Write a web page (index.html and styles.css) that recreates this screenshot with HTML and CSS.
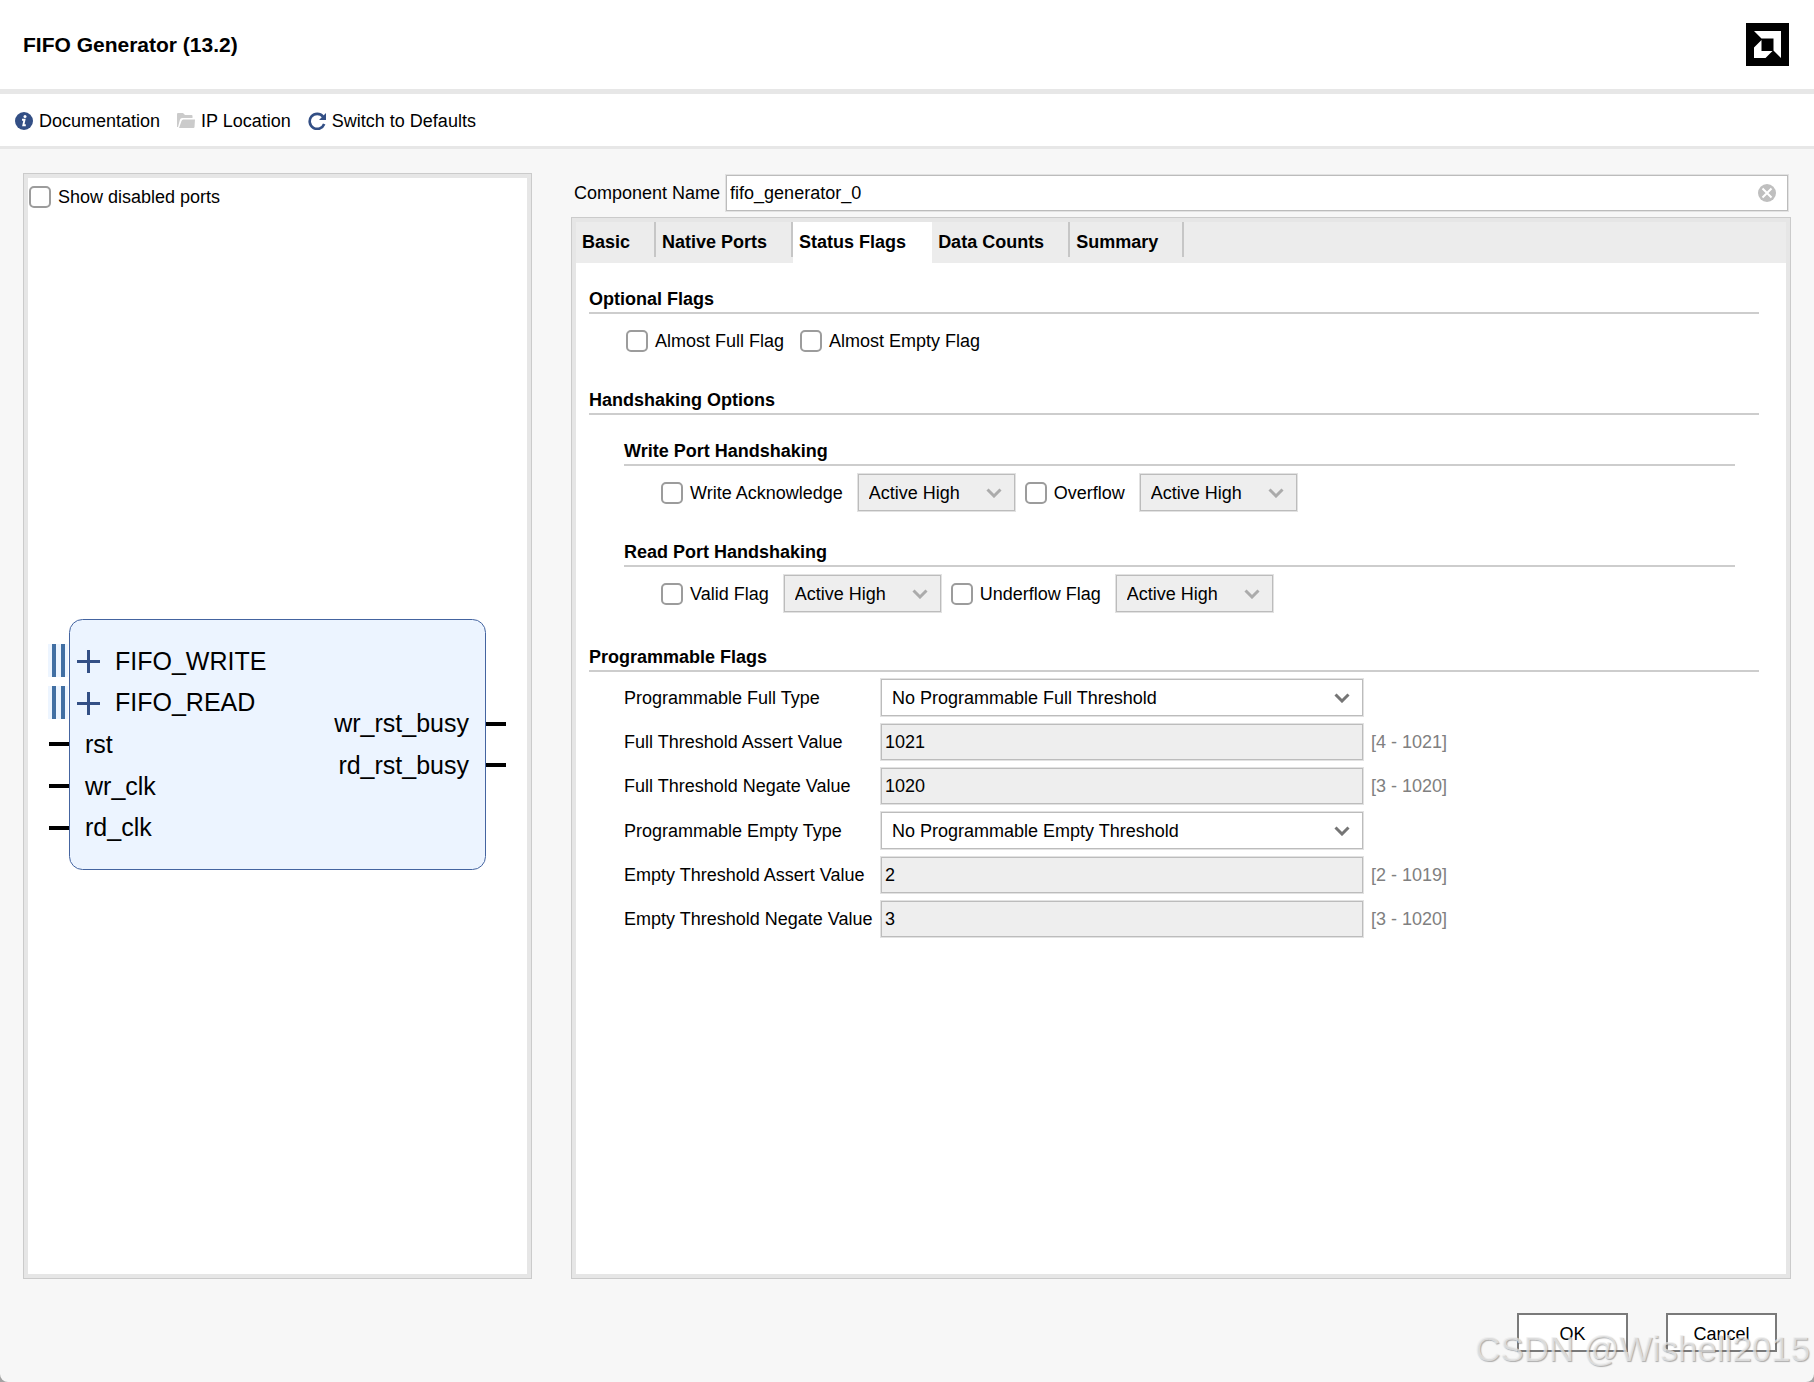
FILE: index.html
```html
<!DOCTYPE html>
<html lang="en">
<head>
    <meta charset="UTF-8">
    <meta name="viewport" content="width=device-width, initial-scale=1.0">
    <title>FIFO Generator (13.2)</title>
    <link rel="stylesheet" href="styles.css">
</head>
<body>
    <div class="window">
        <header class="header">
            <h1>FIFO Generator (13.2)</h1>
            <svg class="logo" viewBox="0 0 43 43" aria-hidden="true">
                <rect width="43" height="43" fill="#000"/>
                <path d="M8 8H35V35L27.5 27.5V15.5H15.5Z" fill="#fff"/>
                <path d="M15.5 17V28H26.5L19.5 35H8V24.500Z" fill="#fff"/>
            </svg>
        </header>

        <!-- Toolbar -->
        <nav class="toolbar">
            <a href="#documentation">
                <svg viewBox="0 0 18 18" aria-hidden="true">
                    <circle cx="9" cy="9" r="9" fill="#334f85"/>
                    <circle cx="10" cy="4.600" r="1.500" fill="#fff"/>
                    <path d="M7 7.800H9.500L8.300 13.200H10.800" fill="none" stroke="#fff" stroke-width="1.900"/>
                </svg>
                Documentation
            </a>
            <a href="#location">
                <svg viewBox="0 0 18 18" aria-hidden="true">
                    <path d="M0 15V2Q0 1 1 1H6L8 3H14.500Q15.500 3 15.500 4V6H5Q3.500 6 3 7.500L1 15Z" fill="#cbcbcb"/>
                    <path d="M2 16L4.500 9Q5 7.500 6.300 7.500H18L17.500 15Q17.400 16 16.500 16Z" fill="#cbcbcb"/>
                </svg>
                IP Location
            </a>
            <a href="#defaults">
                <svg viewBox="0 0 18 18" aria-hidden="true">
                    <path d="M15 4.600A7.500 7.500 0 1 0 16.200 12" fill="none" stroke="#334f85" stroke-width="2.600"/>
                    <path d="M18 1V8H11Z" fill="#334f85"/>
                </svg>
                Switch to Defaults
            </a>
        </nav>

        <main class="main">
            <!-- Block symbol -->
            <section class="panel">
                <div class="panel-inner preview">
                    <label class="check preview-option"><input type="checkbox"> Show disabled ports</label>
                    <div class="preview-canvas">
                        <svg class="diagram" width="459" height="252" viewBox="0 0 459 252" role="img" aria-label="FIFO ports">
                            <rect x="21.500" y="0.500" width="416" height="250" rx="13" fill="#ecf4ff" stroke="#4464a0"/>
                            <g fill="#edf5ff">
                                <rect x="0" y="25" width="20" height="33"/>
                                <rect x="0" y="67" width="20" height="33"/>
                            </g>
                            <g fill="#416fa3">
                                <rect x="4" y="25" width="4" height="33"/>
                                <rect x="13" y="25" width="4" height="33"/>
                                <rect x="4" y="67" width="4" height="33"/>
                                <rect x="13" y="67" width="4" height="33"/>
                            </g>
                            <path d="M29 42.500H52M40.500 31V54M29 84.500H52M40.500 73V96" stroke="#334f85" stroke-width="3"/>
                            <path d="M1 125H21M1 167H21M1 209H21M438 105H458M438 146H458" stroke="#000" stroke-width="4"/>
                            <text x="67" y="51">FIFO_WRITE</text>
                            <text x="67" y="92">FIFO_READ</text>
                            <text x="37" y="134">rst</text>
                            <text x="37" y="176">wr_clk</text>
                            <text x="37" y="217">rd_clk</text>
                            <text x="421" y="113" text-anchor="end">wr_rst_busy</text>
                            <text x="421" y="155" text-anchor="end">rd_rst_busy</text>
                        </svg>
                    </div>
                </div>
            </section>

            <!-- Settings -->
            <section class="settings">
                <div class="component">
                    <label for="component-name">Component Name</label>
                    <div class="component-field">
                        <input class="text-input" type="text" id="component-name" value="fifo_generator_0">
                        <button class="clear" type="button" aria-label="Clear">
                            <svg viewBox="0 0 18 18" aria-hidden="true">
                                <circle cx="9" cy="9" r="9" fill="#bfbfbf"/>
                                <path d="M4.500 4.500L13.500 13.500M13.500 4.500L4.500 13.500" stroke="#fff" stroke-width="2"/>
                            </svg>
                        </button>
                    </div>
                </div>

                <div class="panel settings-panel">
                    <div class="panel-inner">
                        <div class="tabs" role="tablist">
                            <button class="tab" role="tab" type="button"><span>Basic</span></button>
                            <button class="tab" role="tab" type="button"><span>Native Ports</span></button>
                            <button class="tab active" role="tab" type="button" aria-selected="true"><span>Status Flags</span></button>
                            <button class="tab" role="tab" type="button"><span>Data Counts</span></button>
                            <button class="tab" role="tab" type="button"><span>Summary</span></button>
                        </div>

                        <div class="content">
                            <section>
                                <h2>Optional Flags</h2>
                                <div class="row row-wide">
                                    <label class="check"><input type="checkbox"> Almost Full Flag</label>
                                    <label class="check"><input type="checkbox"> Almost Empty Flag</label>
                                </div>
                            </section>

                            <section class="handshaking">
                                <h2>Handshaking Options</h2>
                                <div class="subsection">
                                    <h3>Write Port Handshaking</h3>
                                    <div class="row">
                                        <div class="pair">
                                            <label class="check"><input type="checkbox"> Write Acknowledge</label>
                                            <div class="select">
                                                <select disabled aria-label="Write Acknowledge polarity"><option>Active High</option></select>
                                                <svg viewBox="0 0 16 10" aria-hidden="true"><path d="M1.500 1.500L8 8L14.500 1.500"/></svg>
                                            </div>
                                        </div>
                                        <div class="pair">
                                            <label class="check"><input type="checkbox"> Overflow</label>
                                            <div class="select">
                                                <select disabled aria-label="Overflow polarity"><option>Active High</option></select>
                                                <svg viewBox="0 0 16 10" aria-hidden="true"><path d="M1.500 1.500L8 8L14.500 1.500"/></svg>
                                            </div>
                                        </div>
                                    </div>
                                </div>
                                <div class="subsection">
                                    <h3>Read Port Handshaking</h3>
                                    <div class="row">
                                        <div class="pair">
                                            <label class="check"><input type="checkbox"> Valid Flag</label>
                                            <div class="select">
                                                <select disabled aria-label="Valid Flag polarity"><option>Active High</option></select>
                                                <svg viewBox="0 0 16 10" aria-hidden="true"><path d="M1.500 1.500L8 8L14.500 1.500"/></svg>
                                            </div>
                                        </div>
                                        <div class="pair">
                                            <label class="check"><input type="checkbox"> Underflow Flag</label>
                                            <div class="select">
                                                <select disabled aria-label="Underflow Flag polarity"><option>Active High</option></select>
                                                <svg viewBox="0 0 16 10" aria-hidden="true"><path d="M1.500 1.500L8 8L14.500 1.500"/></svg>
                                            </div>
                                        </div>
                                    </div>
                                </div>
                            </section>

                            <section>
                                <h2>Programmable Flags</h2>
                                <div class="fields">
                                    <div class="field">
                                        <label for="full-type">Programmable Full Type</label>
                                        <div class="select">
                                            <select id="full-type"><option>No Programmable Full Threshold</option></select>
                                            <svg viewBox="0 0 16 10" aria-hidden="true"><path d="M1.500 1.500L8 8L14.500 1.500"/></svg>
                                        </div>
                                    </div>
                                    <div class="field">
                                        <label for="full-assert">Full Threshold Assert Value</label>
                                        <input class="text-input" type="text" id="full-assert" value="1021" disabled>
                                        <span class="range">[4 - 1021]</span>
                                    </div>
                                    <div class="field">
                                        <label for="full-negate">Full Threshold Negate Value</label>
                                        <input class="text-input" type="text" id="full-negate" value="1020" disabled>
                                        <span class="range">[3 - 1020]</span>
                                    </div>
                                    <div class="field">
                                        <label for="empty-type">Programmable Empty Type</label>
                                        <div class="select">
                                            <select id="empty-type"><option>No Programmable Empty Threshold</option></select>
                                            <svg viewBox="0 0 16 10" aria-hidden="true"><path d="M1.500 1.500L8 8L14.500 1.500"/></svg>
                                        </div>
                                    </div>
                                    <div class="field">
                                        <label for="empty-assert">Empty Threshold Assert Value</label>
                                        <input class="text-input" type="text" id="empty-assert" value="2" disabled>
                                        <span class="range">[2 - 1019]</span>
                                    </div>
                                    <div class="field">
                                        <label for="empty-negate">Empty Threshold Negate Value</label>
                                        <input class="text-input" type="text" id="empty-negate" value="3" disabled>
                                        <span class="range">[3 - 1020]</span>
                                    </div>
                                </div>
                            </section>
                        </div>
                    </div>
                </div>
            </section>
        </main>

        <footer class="footer">
            <button class="button" type="button">OK</button>
            <button class="button" type="button">Cancel</button>
        </footer>

        <div class="watermark">CSDN @Wishell2015</div>
    </div>
</body>
</html>
```
FILE: styles.css
```css
* {
    box-sizing: border-box;
}

body {
    margin: 0;
    background-color: #a3a3a3;
    font-family: "Liberation Sans", Arial, sans-serif;
    font-size: 18px;
    line-height: 24px;
    color: #000;
}

input,
select,
button {
    margin: 0;
    font: inherit;
    color: inherit;
}

.window {
    position: relative;
    display: flex;
    flex-direction: column;
    min-height: 100vh;
    background-color: #f7f7f7;
    border-radius: 0 0 8px 8px;
    overflow: hidden;
}

.header {
    display: flex;
    align-items: center;
    justify-content: space-between;
    padding: 23px 25px 23px 23px;
    background-color: #fff;
    border-bottom: 5px solid #e7e7e7;
}

h1 {
    margin: 0;
    font-size: 21px;
}

.logo {
    width: 43px;
    height: 43px;
}

/* Toolbar */
.toolbar {
    display: flex;
    gap: 17px;
    padding: 15px 15px 13px;
    background-color: #fff;
    border-bottom: 3px solid #e7e7e7;
}

.toolbar a {
    display: flex;
    align-items: center;
    gap: 6px;
    color: #000;
    text-decoration: none;
}

.toolbar svg {
    width: 18px;
    height: 18px;
}

.main {
    flex: 1;
    display: grid;
    grid-template-columns: 509px 1fr;
    gap: 39px;
    padding: 24px 23px 0;
}

/* Double frame: thin line outside, thick grey inside */
.panel {
    display: flex;
    padding: 4px;
    background-color: #e6e6e6;
    border: 1px solid #cbcbcb;
}

.panel-inner {
    flex: 1;
    background-color: #fff;
}

/* Checkboxes */
.check {
    display: flex;
    align-items: center;
    gap: 7px;
}

.check input {
    appearance: none;
    width: 22px;
    height: 22px;
    background-color: #fff;
    border: 2px solid #9c9c9c;
    border-radius: 5px;
}

.check input:checked {
    background-color: #334f85;
}

/* Block symbol */
.preview {
    display: flex;
    flex-direction: column;
}

.preview-option {
    height: 37px;
    padding-left: 1px;
}

.preview-canvas {
    flex: 1;
    display: flex;
    align-items: center;
    justify-content: center;
}

.diagram text {
    font-size: 25px;
}

/* Settings */
.settings {
    display: flex;
    flex-direction: column;
}

.component {
    display: flex;
    align-items: center;
    gap: 6px;
    padding: 2px 3px 6px;
}

.component-field {
    position: relative;
    flex: 1;
    display: flex;
}

.text-input {
    width: 100%;
    height: 36px;
    padding: 1px 3px 0;
    background-color: #fff;
    border: 1px solid #bcbcbc;
    outline: 1px solid #e2e2e2;
    border-radius: 0;
}

.text-input:disabled {
    background-color: #eee;
}

.clear {
    position: absolute;
    top: 9px;
    right: 12px;
    width: 18px;
    height: 18px;
    padding: 0;
    background: none;
    border: none;
    cursor: pointer;
}

.clear svg {
    display: block;
}

.settings-panel {
    flex: 1;
}

/* Tabs */
.tabs {
    display: flex;
    background-color: #ececec;
}

.tab {
    height: 41px;
    padding: 0 0 6px;
    background: none;
    border: none;
    font-weight: bold;
    cursor: pointer;
}

.tab span {
    display: block;
    padding: 8px 24px 3px 6px;
    border-right: 2px solid #c6c6c6;
}

.tab.active {
    background-color: #fff;
}

.tab.active span {
    border-color: transparent;
}

.content {
    display: flex;
    flex-direction: column;
    gap: 21px;
    padding: 24px 27px 24px 13px;
}

h2,
h3 {
    margin: 0;
    padding-bottom: 1px;
    border-bottom: 2px solid #cdcdcd;
    font-size: 18px;
}

.row {
    display: flex;
    align-items: center;
    gap: 10px;
    height: 53px;
    padding-left: 37px;
}

.row-wide {
    gap: 16px;
}

.pair {
    display: flex;
    align-items: center;
    gap: 15px;
}

.handshaking {
    padding-bottom: 4px;
}

.subsection {
    margin: 21px 24px 0 35px;
}

h2 + .subsection {
    margin-top: 24px;
}

/* Drop-downs */
.select {
    position: relative;
    width: 157px;
}

.select select {
    display: block;
    appearance: none;
    width: 100%;
    height: 37px;
    padding: 0 36px 0 10px;
    background-color: #fff;
    border: 1px solid #bcbcbc;
    outline: 1px solid #e2e2e2;
    border-radius: 0;
}

.select select:disabled {
    background-color: #eee;
    color: #000;
    opacity: 1;
}

.select svg {
    position: absolute;
    top: 14px;
    right: 13px;
    width: 16px;
    height: 10px;
    fill: none;
    stroke: #757575;
    stroke-width: 3;
    pointer-events: none;
}

.select select:disabled + svg {
    stroke: #ababab;
}

/* Programmable flags */
.fields {
    display: flex;
    flex-direction: column;
    gap: 8px;
    padding: 7px 0 0 35px;
}

.field {
    display: grid;
    grid-template-columns: 249px 482px 1fr;
    align-items: center;
    gap: 8px;
}

.field .select {
    width: 100%;
}

.range {
    color: #808080;
}

.footer {
    display: flex;
    justify-content: flex-end;
    gap: 38px;
    padding: 34px 37px 30px;
}

.button {
    width: 111px;
    height: 39px;
    padding: 2px 0 0;
    background-color: #fff;
    border: 2px solid #7a7a7a;
    cursor: pointer;
}

.watermark {
    position: absolute;
    right: 4px;
    bottom: 13px;
    font-size: 35px;
    line-height: 40px;
    color: rgba(238, 238, 238, 0.7);
    text-shadow: 1px 1px 1px rgba(100, 100, 100, 0.5);
    pointer-events: none;
}
```
